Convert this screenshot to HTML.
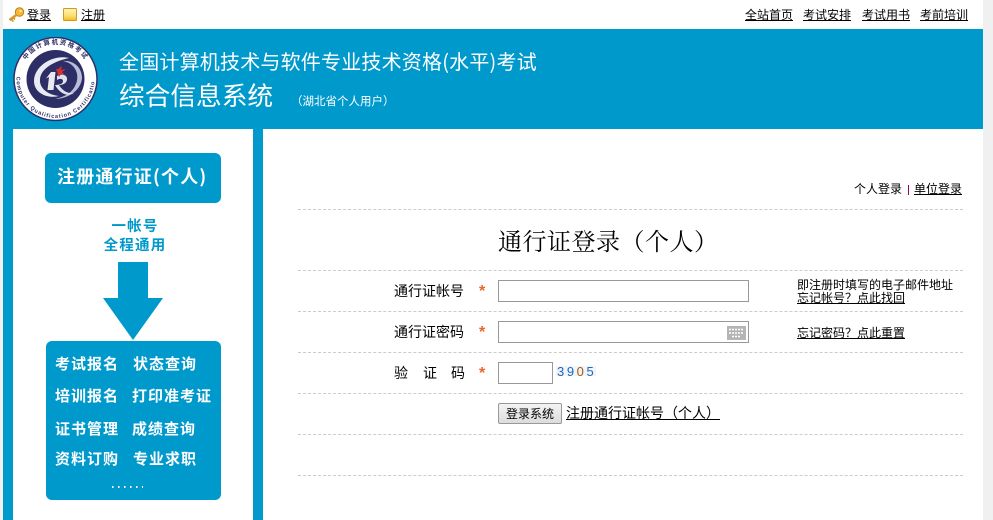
<!DOCTYPE html>
<html lang="zh">
<head>
<meta charset="utf-8">
<title>通行证登录</title>
<style>
html,body{margin:0;padding:0;}
body{width:993px;height:520px;overflow:hidden;background:#f0f0f0;position:relative;font-family:"Liberation Sans","WenQuanYi Zen Hei","Noto Sans CJK SC",sans-serif;font-size:12px;color:#000;}
.a{position:absolute;white-space:nowrap;}
a{color:#000;text-decoration:underline;}
.w{font-family:"Noto Sans CJK SC",sans-serif;color:#fff;font-weight:bold;}
.m{font-size:15px;line-height:22px;letter-spacing:1px;}
.dash{position:absolute;left:298px;width:665px;height:0;border-top:1px dashed #ccc;}
.lb{position:absolute;font-size:14px;line-height:16px;white-space:nowrap;font-family:"Liberation Sans","WenQuanYi Zen Hei","Noto Sans CJK SC",sans-serif;}
.st{position:absolute;left:479px;color:#e8662c;font-size:16px;line-height:16px;font-weight:bold;}
.in{position:absolute;box-sizing:border-box;background:#fff;border:1px solid #999;}
</style>
</head>
<body>
<div class="a" style="left:3px;top:0;width:980px;height:520px;background:#fff"></div>
<div class="a" style="left:3px;top:29px;width:980px;height:100px;background:#0099cc"></div>
<div class="a" style="left:3px;top:129px;width:10px;height:391px;background:#0099cc"></div>
<div class="a" style="left:253px;top:129px;width:10px;height:391px;background:#0099cc"></div>

<!-- top bar -->
<svg class="a" style="left:8px;top:7px" width="17" height="15" viewBox="0 0 17 15"><circle cx="11.500" cy="5" r="4.200" fill="#f4b93a" stroke="#c07f12"/><circle cx="12.500" cy="4" r="1.100" fill="#fff3c8"/><path d="M9 7.500L1.500 13" stroke="#d89a24" stroke-width="2.600" fill="none"/><path d="M3.500 12.500l2 2M5.500 11l1.500 1.500" stroke="#c98a18" stroke-width="1.500" fill="none"/></svg>
<a class="a" style="left:27px;top:8px;line-height:14px" href="#">登录</a>
<svg class="a" style="left:63px;top:8px" width="15" height="14" viewBox="0 0 15 14"><defs><linearGradient id="ng" x1="0" y1="0" x2="0" y2="1"><stop offset="0" stop-color="#fff3b0"/><stop offset=".55" stop-color="#fde27a"/><stop offset="1" stop-color="#f5bb22"/></linearGradient></defs><rect x="0.500" y="0.500" width="13" height="12" rx="1" fill="url(#ng)" stroke="#d09a1c"/></svg>
<a class="a" style="left:81px;top:8px;line-height:14px" href="#">注册</a>
<a class="a" style="left:745px;top:8px;line-height:14px" href="#">全站首页</a>
<a class="a" style="left:803px;top:8px;line-height:14px" href="#">考试安排</a>
<a class="a" style="left:862px;top:8px;line-height:14px" href="#">考试用书</a>
<a class="a" style="left:920px;top:8px;line-height:14px" href="#">考前培训</a>

<!-- logo -->
<svg class="a" style="left:13px;top:37px" width="86" height="86" viewBox="0 0 86 86">
<circle cx="42.500" cy="42" r="41.500" fill="#fff" stroke="#2d2e66" stroke-width="1.500"/>
<circle cx="42.500" cy="42" r="29" fill="#2d2e66"/>
<path d="M56 21C40 17 21 29 21 44C21 56 34 62 46 59C36 58 26 52 27 42C28 31 42 24 56 21Z" fill="#e9ebf3"/>
<path d="M50 24C62 26 68 38 62 49C58 57 50 60 42 62C54 62 68 54 69 41C69 30 60 23 50 24Z" fill="#b9bdd8"/>
<path d="M38 35h4.500l-2 18h-6l1.500-13-3 1.500z" fill="#e8e8ee"/>
<path d="M44 39c5-3 11-1 10 4c-1 4-5 5-8 5c3 5 8 9 15 8c-6 4-14 1-19-8c4 0 8-1 8-4c0-2-3-3-6-1z" fill="#dfe1ec"/>
<path d="M43 32l3 8 2-3 4 1-3-3 4-3-5 1 1-4-4 3z" fill="#d8302a"/>
<path id="ct" d="M7.500 42A35 35 0 0 1 77.500 42" fill="none"/>
<text font-size="6.500" font-weight="bold" fill="#2d2e66" font-family="Noto Sans CJK SC" text-anchor="middle" letter-spacing="1.300"><textPath href="#ct" startOffset="50%">中国计算机资格考试</textPath></text>
<path id="cq" d="M3.500 42A39 39 0 0 0 81.500 42" fill="none"/>
<text font-size="5.500" font-weight="bold" fill="#2d2e66" font-family="Liberation Sans" text-anchor="middle" letter-spacing=".9"><textPath href="#cq" startOffset="50%">Computer Qualification Certification</textPath></text>
</svg>

<!-- header text -->
<div class="a" style="left:119px;top:48px;font-family:'Noto Sans CJK SC',sans-serif;font-size:20px;line-height:26px;letter-spacing:.2px;color:#fff">全国计算机技术与软件专业技术资格(水平)考试</div>
<div class="a" style="left:119px;top:78px;font-family:'Noto Sans CJK SC',sans-serif;font-size:25.700px;line-height:34px;color:#fff">综合信息系统</div>
<div class="a" style="left:291px;top:93px;font-family:'Noto Sans CJK SC',sans-serif;font-size:11.500px;line-height:16px;color:#fff">（湖北省个人用户）</div>

<!-- left -->
<div class="a" style="left:45px;top:153px;width:176px;height:50px;background:#0099cc;border-radius:6px"></div>
<div class="a w" style="left:57px;top:164px;font-size:18px;line-height:25px;letter-spacing:1.200px">注册通行证(个人)</div>
<div class="a" style="left:15px;top:217px;width:240px;text-align:center;font-family:'Noto Sans CJK SC',sans-serif;font-weight:bold;font-size:14.500px;line-height:18.500px;color:#0099cc;letter-spacing:1.200px">一帐号<br>全程通用</div>
<svg class="a" style="left:103px;top:262px" width="60" height="80" viewBox="0 0 60 80"><path d="M15 0h30v36h15L30 78 0 36h15z" fill="#0099cc"/></svg>
<div class="a" style="left:46px;top:341px;width:175px;height:159px;background:#0099cc;border-radius:6px"></div>
<div class="a w m" style="left:55px;top:353px">考试报名</div>
<div class="a w m" style="left:133px;top:353px">状态查询</div>
<div class="a w m" style="left:55px;top:385px">培训报名</div>
<div class="a w m" style="left:132px;top:385px">打印准考证</div>
<div class="a w m" style="left:55px;top:418px">证书管理</div>
<div class="a w m" style="left:132px;top:418px">成绩查询</div>
<div class="a w m" style="left:55px;top:448px">资料订购</div>
<div class="a w m" style="left:133px;top:448px">专业求职</div>
<div class="a" style="left:112px;top:486px;width:31px;height:2px;background:repeating-linear-gradient(90deg,#fff 0 1.500px,transparent 1.500px 6px)"></div>

<!-- right -->
<div class="a" style="left:854px;top:182px;line-height:15px">个人登录</div>
<div class="a" style="left:908px;top:185px;width:1px;height:10px;background:#990066"></div>
<a class="a" style="left:914px;top:182px;line-height:15px" href="#">单位登录</a>
<div class="dash" style="top:209px"></div>
<div class="a" style="left:498px;top:224px;font-family:'Noto Serif CJK SC',serif;font-size:24px;line-height:32px;letter-spacing:.5px">通行证登录（个人）</div>
<div class="dash" style="top:270px"></div>
<div class="dash" style="top:311px"></div>
<div class="dash" style="top:352px"></div>
<div class="dash" style="top:393px"></div>
<div class="dash" style="top:434px"></div>
<div class="dash" style="top:475px"></div>

<div class="lb" style="left:394px;top:283px">通行证帐号</div>
<div class="st" style="top:284px">*</div>
<div class="in" style="left:498px;top:280px;width:251px;height:22px"></div>
<div class="a" style="left:797px;top:278px;line-height:14px">即注册时填写的电子邮件地址</div>
<a class="a" style="left:797px;top:291px;line-height:14px" href="#">忘记帐号？点此找回</a>

<div class="lb" style="left:394px;top:324px">通行证密码</div>
<div class="st" style="top:325px">*</div>
<div class="in" style="left:498px;top:321px;width:251px;height:22px"></div>
<svg class="a" style="left:727px;top:326px" width="20" height="14" viewBox="0 0 20 14"><rect width="19" height="14" fill="#b5b5b5"/><path d="M2 3.500h15M2 7h15M5 10.500h9" stroke="#fff" stroke-width="1.500" stroke-dasharray="2 1"/></svg>
<a class="a" style="left:797px;top:326px;line-height:14px" href="#">忘记密码？点此重置</a>

<div class="lb" style="left:394px;top:365px">验</div>
<div class="lb" style="left:423px;top:365px">证</div>
<div class="lb" style="left:451px;top:365px">码</div>
<div class="st" style="top:366px">*</div>
<div class="in" style="left:498px;top:362px;width:55px;height:22px"></div>
<div class="a" style="left:556px;top:366px;width:40px;height:10px;background:#f2f5f5"></div>
<div class="a" style="left:557px;top:364px;font-family:'Liberation Sans',sans-serif;font-size:13px;line-height:16px;letter-spacing:2.600px;color:#1a66cc">39<span style="color:#a85a14">0</span>5</div>

<div class="a" style="left:498px;top:403px;box-sizing:border-box;width:64px;height:21px;border:1px solid #999;border-radius:2px;background:linear-gradient(#f4f4f4,#dcdcdc);text-align:center;line-height:20px">登录系统</div>
<a class="a" style="left:566px;top:405px;font-size:14px;line-height:16px" href="#">注册通行证帐号（个人）</a>
</body>
</html>
